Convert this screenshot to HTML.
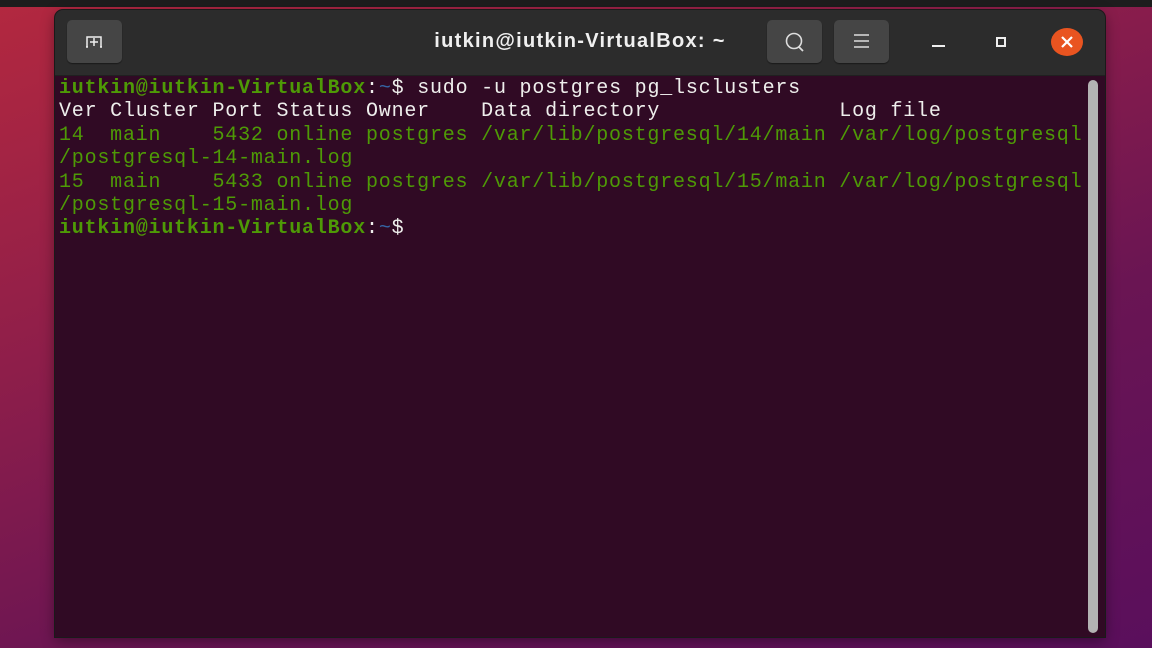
<!DOCTYPE html>
<html><head><meta charset="utf-8"><style>
html,body{margin:0;padding:0;width:1152px;height:648px;overflow:hidden}
body{position:relative;background:linear-gradient(160deg,#b3283f 0%,#8e1e4a 35%,#6a1553 65%,#5a0f5c 100%);font-family:"Liberation Sans",sans-serif}
.top{position:absolute;left:0;top:0;width:1152px;height:7px;background:#1d1d1d}
.win{position:absolute;left:55px;top:10px;width:1050px;height:627px;background:#300a24;border-radius:8px 8px 0 0;box-shadow:0 0 0 1px #1a1a1a,0 4px 14px rgba(0,0,0,.4);overflow:hidden}
.tb{position:absolute;left:0;top:0;width:1050px;height:65px;background:#2c2c2c;border-bottom:1px solid #202020}
.btn{position:absolute;top:10px;width:55px;height:43px;background:#454545;border-radius:5px;box-shadow:0 1px 1px #1a1a1a}
.title{position:absolute;left:0;width:1050px;top:20px;text-align:center;color:#f0f0f0;font-weight:bold;font-size:20px;letter-spacing:1.3px}
.term{position:absolute;left:4px;top:67px;font-family:"Liberation Mono",monospace;font-size:20px;letter-spacing:0.79px;line-height:23.4px;color:#4e9a06;white-space:pre}
.w{color:#eeeeec}.b{color:#3465a4}.g{color:#4e9a06;font-weight:bold}
.sb{position:absolute;left:1033px;top:70px;width:10px;height:553px;background:#b3b3b3;border-radius:5px}
</style></head><body>
<div class="top"></div>
<div class="win">
 <div class="tb">
  <div class="btn" style="left:12px"><svg width="55" height="43"><path d="M20 27 V17 H34 V27 M33 27h2 M19 27h2" stroke="#eee" stroke-width="1.5" fill="none"/><path d="M27 18v8 M23 22h8" stroke="#eee" stroke-width="1.5"/></svg></div>
  <div class="title">iutkin@iutkin-VirtualBox: ~</div>
  <div class="btn" style="left:712px"><svg width="55" height="43"><circle cx="27" cy="21" r="7.5" stroke="#ddd" stroke-width="1.6" fill="none"/><path d="M32 27l4 4" stroke="#ddd" stroke-width="1.8"/></svg></div>
  <div class="btn" style="left:779px"><svg width="55" height="43"><path d="M20 15h15M20 21h15M20 27h15" stroke="#ddd" stroke-width="1.4"/></svg></div>
  <div style="position:absolute;left:877px;top:35px;width:13px;height:2px;background:#eee"></div>
  <div style="position:absolute;left:941px;top:27px;width:10px;height:10px;border:2px solid #eee;box-sizing:border-box"></div>
  <div style="position:absolute;left:996px;top:18px;width:32px;height:28px;border-radius:50%;background:#e95420"><svg width="32" height="28"><path d="M11 9l10 10M21 9l-10 10" stroke="#fff" stroke-width="2.2"/></svg></div>
 </div>
 <div class="term"><span class="g">iutkin@iutkin-VirtualBox</span><span class="w">:</span><span class="b">~</span><span class="w">$ sudo -u postgres pg_lsclusters</span>
<span class="w">Ver Cluster Port Status Owner    Data directory              Log file</span>
14  main    5432 online postgres /var/lib/postgresql/14/main /var/log/postgresql
/postgresql-14-main.log
15  main    5433 online postgres /var/lib/postgresql/15/main /var/log/postgresql
/postgresql-15-main.log
<span class="g">iutkin@iutkin-VirtualBox</span><span class="w">:</span><span class="b">~</span><span class="w">$</span></div>
 <div class="sb"></div>
</div>
</body></html>
